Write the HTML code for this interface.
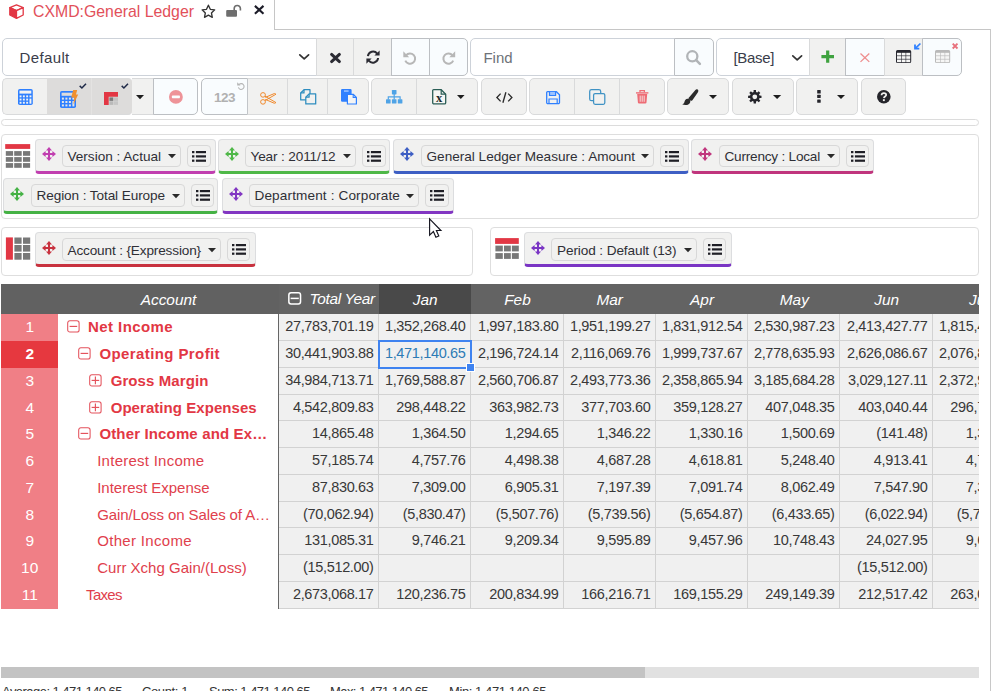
<!DOCTYPE html>
<html><head><meta charset="utf-8"><title>CXMD:General Ledger</title>
<style>
html,body{margin:0;padding:0;background:#fff;}
body{width:995px;height:691px;overflow:hidden;position:relative;font-family:"Liberation Sans",sans-serif;}
.a{position:absolute;box-sizing:border-box;}
.t{position:absolute;white-space:pre;font-family:"Liberation Sans",sans-serif;}
svg{overflow:visible;}

.btn{background:#f1f1f0;border:1px solid #d9dadb;}
.btnw{background:#f9fcfe;border:1px solid #bcbfc3;}
.act{background:#dddcdb;}
.chip{background:#f1f1f0;border:1px solid #dcdddf;border-radius:4px;}
.dd{background:#f1f1f0;border:1px solid #d8d8d8;border-radius:4px;}
.pbox{background:#fff;border:1px solid #dedede;border-radius:4px;}
</style></head>
<body>
<div class="a " style="left:274px;top:0px;width:717px;height:30px;border-left:1px solid #c6c6c6;border-bottom:1px solid #c6c6c6;"></div>
<div class="a " style="left:990px;top:29px;width:1px;height:662px;background:#c8c8c8;"></div>
<span id="t1" class="t" style="left:33.3px;top:0.5px;font-size:17px;color:#e2505a;line-height:22px;height:22px;transform:scaleX(0.9311);transform-origin:0 0;">CXMD:General Ledger</span>
<div class="a " style="left:2px;top:38px;width:315px;height:38px;background:#fff;border:1px solid #cdd2d9;border-radius:5px 0 0 5px;"></div>
<span id="t2" class="t" style="left:19.6px;top:46.7px;font-size:15px;color:#3a3d4a;line-height:22px;height:22px;letter-spacing:0.353px;">Default</span>
<div class="a btn" style="left:316px;top:38px;width:38px;height:38px;"></div>
<div class="a btn" style="left:353px;top:38px;width:39px;height:38px;"></div>
<div class="a btnw" style="left:391px;top:38px;width:39px;height:38px;"></div>
<div class="a btnw" style="left:429px;top:38px;width:39px;height:38px;border-radius:0 5px 5px 0;"></div>
<div class="a " style="left:470px;top:38px;width:205px;height:38px;background:#fff;border:1px solid #cdd2d9;border-radius:5px 0 0 5px;"></div>
<span id="t3" class="t" style="left:483.5px;top:46.7px;font-size:15px;color:#6e7278;line-height:22px;height:22px;letter-spacing:-0.047px;">Find</span>
<div class="a btnw" style="left:674px;top:38px;width:40px;height:38px;border-radius:0 5px 5px 0;"></div>
<div class="a " style="left:716px;top:38px;width:94px;height:38px;background:#fff;border:1px solid #cdd2d9;border-radius:5px 0 0 5px;"></div>
<span id="t4" class="t" style="left:733.5px;top:46.7px;font-size:15px;color:#3a3d4a;line-height:22px;height:22px;letter-spacing:-0.339px;">[Base]</span>
<div class="a btn" style="left:809px;top:38px;width:37px;height:38px;"></div>
<div class="a btnw" style="left:845px;top:38px;width:40px;height:38px;"></div>
<div class="a btn" style="left:884px;top:38px;width:39px;height:38px;"></div>
<div class="a btnw" style="left:922px;top:38px;width:40px;height:38px;border-radius:0 5px 5px 0;"></div>
<div class="a btn" style="left:2px;top:78px;width:46px;height:37px;border-radius:5px 0 0 5px;border-right-color:#f1f1f0;"></div>
<div class="a btn act" style="left:47px;top:78px;width:45px;height:37px;border-radius:0;border-left-color:#dddcdb;border-right-color:#e4e3e2;border-radius:0;"></div>
<div class="a btn act" style="left:91px;top:78px;width:41px;height:37px;border-radius:0 4px 4px 0;border-left-color:#e4e3e2;border-right-color:#dddcdb;"></div>
<div class="a btn" style="left:132px;top:78px;width:22px;height:37px;border-radius:0;border-left:none;border-right:none;"></div>
<div class="a btnw" style="left:153px;top:78px;width:45px;height:37px;border-radius:0 5px 5px 0;"></div>
<div class="a btnw" style="left:201px;top:78px;width:47px;height:37px;border-radius:5px 0 0 5px;"></div>
<div class="a btn" style="left:247px;top:78px;width:41px;height:37px;border-radius:0;border-left-color:#c2c5c9;"></div>
<div class="a btn" style="left:287px;top:78px;width:41px;height:37px;border-radius:0;"></div>
<div class="a btn" style="left:327px;top:78px;width:42px;height:37px;border-radius:0 5px 5px 0;"></div>
<div class="a btn" style="left:371px;top:78px;width:46px;height:37px;border-radius:5px 0 0 5px;"></div>
<div class="a btn" style="left:416px;top:78px;width:62px;height:37px;border-radius:0 5px 5px 0;"></div>
<div class="a btn" style="left:481px;top:78px;width:46px;height:37px;border-radius:5px;"></div>
<div class="a btn" style="left:529px;top:78px;width:46px;height:37px;border-radius:5px 0 0 5px;"></div>
<div class="a btn" style="left:574px;top:78px;width:46px;height:37px;border-radius:0;"></div>
<div class="a btn" style="left:619px;top:78px;width:46px;height:37px;border-radius:0 5px 5px 0;"></div>
<div class="a btn" style="left:667px;top:78px;width:62px;height:37px;border-radius:5px;"></div>
<div class="a btn" style="left:732px;top:78px;width:62px;height:37px;border-radius:5px;"></div>
<div class="a btn" style="left:796px;top:78px;width:62px;height:37px;border-radius:5px;"></div>
<div class="a btn" style="left:861px;top:78px;width:45px;height:37px;border-radius:5px;"></div>
<div class="a " style="left:1px;top:119px;width:978px;height:7px;border:1px solid #dcdcdc;border-radius:4px;background:#fff;"></div>
<div class="a pbox" style="left:1px;top:134px;width:978px;height:85px;"></div>
<div class="a pbox" style="left:1px;top:227px;width:472px;height:49px;"></div>
<div class="a pbox" style="left:490px;top:227px;width:489px;height:49px;"></div>
<div class="a chip" style="left:35px;top:139px;width:181px;height:35px;border-bottom:3px solid #c13fb0;"></div>
<div class="a dd" style="left:62px;top:145px;width:119px;height:22px;"></div>
<div class="a dd" style="left:187px;top:145px;width:24px;height:22px;"></div>
<span id="t5" class="t" style="left:67.5px;top:148.1px;font-size:13.6px;color:#2f2f36;line-height:18px;height:18px;letter-spacing:-0.013px;">Version : Actual</span>
<svg class="a" style="left:168px;top:154.3px;" width="8" height="4.2" viewBox="0 0 8 4.2"><path d="M0 0h8L4 4.2z" fill="#2a2a2a"/></svg>
<svg class="a" style="left:192.0px;top:150.7px;" width="14" height="11" viewBox="0 0 14 11"><g fill="#1f1f26"><rect x="0" y="0" width="2.4" height="2.2"/><rect x="0" y="4.3" width="2.4" height="2.2"/><rect x="0" y="8.6" width="2.4" height="2.2"/><rect x="3.9" y="0" width="10.1" height="2.2"/><rect x="3.9" y="4.3" width="10.1" height="2.2"/><rect x="3.9" y="8.6" width="10.1" height="2.2"/></g></svg>
<svg class="a" style="left:41.9px;top:146.9px;" width="14" height="14" viewBox="0 0 14 14"><g fill="none" stroke="#c13fb0" stroke-width="2"><path d="M7 2v10M2 7h10"/></g><g fill="#c13fb0"><path d="M7 0l3 3.6H4z"/><path d="M7 14l3-3.6H4z"/><path d="M0 7l3.6-3v6z"/><path d="M14 7l-3.6-3v6z"/></g></svg>
<div class="a chip" style="left:218px;top:139px;width:172px;height:35px;border-bottom:3px solid #4fb848;"></div>
<div class="a dd" style="left:245px;top:145px;width:111px;height:22px;"></div>
<div class="a dd" style="left:362px;top:145px;width:24px;height:22px;"></div>
<span id="t6" class="t" style="left:250.5px;top:148.1px;font-size:13.6px;color:#2f2f36;line-height:18px;height:18px;letter-spacing:-0.138px;">Year : 2011/12</span>
<svg class="a" style="left:343px;top:154.3px;" width="8" height="4.2" viewBox="0 0 8 4.2"><path d="M0 0h8L4 4.2z" fill="#2a2a2a"/></svg>
<svg class="a" style="left:367.0px;top:150.7px;" width="14" height="11" viewBox="0 0 14 11"><g fill="#1f1f26"><rect x="0" y="0" width="2.4" height="2.2"/><rect x="0" y="4.3" width="2.4" height="2.2"/><rect x="0" y="8.6" width="2.4" height="2.2"/><rect x="3.9" y="0" width="10.1" height="2.2"/><rect x="3.9" y="4.3" width="10.1" height="2.2"/><rect x="3.9" y="8.6" width="10.1" height="2.2"/></g></svg>
<svg class="a" style="left:224.9px;top:146.9px;" width="14" height="14" viewBox="0 0 14 14"><g fill="none" stroke="#4fb848" stroke-width="2"><path d="M7 2v10M2 7h10"/></g><g fill="#4fb848"><path d="M7 0l3 3.6H4z"/><path d="M7 14l3-3.6H4z"/><path d="M0 7l3.6-3v6z"/><path d="M14 7l-3.6-3v6z"/></g></svg>
<div class="a chip" style="left:393px;top:139px;width:296px;height:35px;border-bottom:3px solid #3e5fc4;"></div>
<div class="a dd" style="left:421px;top:145px;width:233px;height:22px;"></div>
<div class="a dd" style="left:660px;top:145px;width:24px;height:22px;"></div>
<span id="t7" class="t" style="left:426.5px;top:148.1px;font-size:13.6px;color:#2f2f36;line-height:18px;height:18px;letter-spacing:-0.002px;">General Ledger Measure : Amount</span>
<svg class="a" style="left:641px;top:154.3px;" width="8" height="4.2" viewBox="0 0 8 4.2"><path d="M0 0h8L4 4.2z" fill="#2a2a2a"/></svg>
<svg class="a" style="left:665.0px;top:150.7px;" width="14" height="11" viewBox="0 0 14 11"><g fill="#1f1f26"><rect x="0" y="0" width="2.4" height="2.2"/><rect x="0" y="4.3" width="2.4" height="2.2"/><rect x="0" y="8.6" width="2.4" height="2.2"/><rect x="3.9" y="0" width="10.1" height="2.2"/><rect x="3.9" y="4.3" width="10.1" height="2.2"/><rect x="3.9" y="8.6" width="10.1" height="2.2"/></g></svg>
<svg class="a" style="left:399.9px;top:146.9px;" width="14" height="14" viewBox="0 0 14 14"><g fill="none" stroke="#3e5fc4" stroke-width="2"><path d="M7 2v10M2 7h10"/></g><g fill="#3e5fc4"><path d="M7 0l3 3.6H4z"/><path d="M7 14l3-3.6H4z"/><path d="M0 7l3.6-3v6z"/><path d="M14 7l-3.6-3v6z"/></g></svg>
<div class="a chip" style="left:691px;top:139px;width:183px;height:35px;border-bottom:3px solid #c0357d;"></div>
<div class="a dd" style="left:719px;top:145px;width:121px;height:22px;"></div>
<div class="a dd" style="left:846px;top:145px;width:23px;height:22px;"></div>
<span id="t8" class="t" style="left:724.5px;top:148.1px;font-size:13.6px;color:#2f2f36;line-height:18px;height:18px;letter-spacing:-0.218px;">Currency : Local</span>
<svg class="a" style="left:827px;top:154.3px;" width="8" height="4.2" viewBox="0 0 8 4.2"><path d="M0 0h8L4 4.2z" fill="#2a2a2a"/></svg>
<svg class="a" style="left:850.5px;top:150.7px;" width="14" height="11" viewBox="0 0 14 11"><g fill="#1f1f26"><rect x="0" y="0" width="2.4" height="2.2"/><rect x="0" y="4.3" width="2.4" height="2.2"/><rect x="0" y="8.6" width="2.4" height="2.2"/><rect x="3.9" y="0" width="10.1" height="2.2"/><rect x="3.9" y="4.3" width="10.1" height="2.2"/><rect x="3.9" y="8.6" width="10.1" height="2.2"/></g></svg>
<svg class="a" style="left:697.9px;top:146.9px;" width="14" height="14" viewBox="0 0 14 14"><g fill="none" stroke="#c0357d" stroke-width="2"><path d="M7 2v10M2 7h10"/></g><g fill="#c0357d"><path d="M7 0l3 3.6H4z"/><path d="M7 14l3-3.6H4z"/><path d="M0 7l3.6-3v6z"/><path d="M14 7l-3.6-3v6z"/></g></svg>
<div class="a chip" style="left:3px;top:178px;width:215px;height:36px;border-bottom:3px solid #45b245;"></div>
<div class="a dd" style="left:31px;top:184px;width:154px;height:23px;"></div>
<div class="a dd" style="left:191px;top:184px;width:23px;height:23px;"></div>
<span id="t9" class="t" style="left:36.5px;top:187.3px;font-size:13.6px;color:#2f2f36;line-height:18px;height:18px;letter-spacing:-0.095px;">Region : Total Europe</span>
<svg class="a" style="left:172px;top:194.0px;" width="8" height="4.2" viewBox="0 0 8 4.2"><path d="M0 0h8L4 4.2z" fill="#2a2a2a"/></svg>
<svg class="a" style="left:195.5px;top:190.39999999999998px;" width="14" height="11" viewBox="0 0 14 11"><g fill="#1f1f26"><rect x="0" y="0" width="2.4" height="2.2"/><rect x="0" y="4.3" width="2.4" height="2.2"/><rect x="0" y="8.6" width="2.4" height="2.2"/><rect x="3.9" y="0" width="10.1" height="2.2"/><rect x="3.9" y="4.3" width="10.1" height="2.2"/><rect x="3.9" y="8.6" width="10.1" height="2.2"/></g></svg>
<svg class="a" style="left:9.899999999999999px;top:187px;" width="14" height="14" viewBox="0 0 14 14"><g fill="none" stroke="#45b245" stroke-width="2"><path d="M7 2v10M2 7h10"/></g><g fill="#45b245"><path d="M7 0l3 3.6H4z"/><path d="M7 14l3-3.6H4z"/><path d="M0 7l3.6-3v6z"/><path d="M14 7l-3.6-3v6z"/></g></svg>
<div class="a chip" style="left:222px;top:178px;width:232px;height:36px;border-bottom:3px solid #8236c2;"></div>
<div class="a dd" style="left:249px;top:184px;width:170px;height:23px;"></div>
<div class="a dd" style="left:425px;top:184px;width:24px;height:23px;"></div>
<span id="t10" class="t" style="left:254.5px;top:187.3px;font-size:13.6px;color:#2f2f36;line-height:18px;height:18px;letter-spacing:0.122px;">Department : Corporate</span>
<svg class="a" style="left:406px;top:194.0px;" width="8" height="4.2" viewBox="0 0 8 4.2"><path d="M0 0h8L4 4.2z" fill="#2a2a2a"/></svg>
<svg class="a" style="left:430.0px;top:190.39999999999998px;" width="14" height="11" viewBox="0 0 14 11"><g fill="#1f1f26"><rect x="0" y="0" width="2.4" height="2.2"/><rect x="0" y="4.3" width="2.4" height="2.2"/><rect x="0" y="8.6" width="2.4" height="2.2"/><rect x="3.9" y="0" width="10.1" height="2.2"/><rect x="3.9" y="4.3" width="10.1" height="2.2"/><rect x="3.9" y="8.6" width="10.1" height="2.2"/></g></svg>
<svg class="a" style="left:228.9px;top:187px;" width="14" height="14" viewBox="0 0 14 14"><g fill="none" stroke="#8236c2" stroke-width="2"><path d="M7 2v10M2 7h10"/></g><g fill="#8236c2"><path d="M7 0l3 3.6H4z"/><path d="M7 14l3-3.6H4z"/><path d="M0 7l3.6-3v6z"/><path d="M14 7l-3.6-3v6z"/></g></svg>
<div class="a chip" style="left:35px;top:232px;width:221px;height:35px;border-bottom:3px solid #c8323f;"></div>
<div class="a dd" style="left:62px;top:238px;width:159px;height:23px;"></div>
<div class="a dd" style="left:227px;top:238px;width:23px;height:23px;"></div>
<span id="t11" class="t" style="left:67.5px;top:241.5px;font-size:13.6px;color:#2f2f36;line-height:18px;height:18px;letter-spacing:-0.149px;">Account : {Expression}</span>
<svg class="a" style="left:208px;top:248.0px;" width="8" height="4.2" viewBox="0 0 8 4.2"><path d="M0 0h8L4 4.2z" fill="#2a2a2a"/></svg>
<svg class="a" style="left:231.5px;top:244.39999999999998px;" width="14" height="11" viewBox="0 0 14 11"><g fill="#1f1f26"><rect x="0" y="0" width="2.4" height="2.2"/><rect x="0" y="4.3" width="2.4" height="2.2"/><rect x="0" y="8.6" width="2.4" height="2.2"/><rect x="3.9" y="0" width="10.1" height="2.2"/><rect x="3.9" y="4.3" width="10.1" height="2.2"/><rect x="3.9" y="8.6" width="10.1" height="2.2"/></g></svg>
<svg class="a" style="left:41.9px;top:241px;" width="14" height="14" viewBox="0 0 14 14"><g fill="none" stroke="#c8323f" stroke-width="2"><path d="M7 2v10M2 7h10"/></g><g fill="#c8323f"><path d="M7 0l3 3.6H4z"/><path d="M7 14l3-3.6H4z"/><path d="M0 7l3.6-3v6z"/><path d="M14 7l-3.6-3v6z"/></g></svg>
<div class="a chip" style="left:524px;top:232px;width:208px;height:35px;border-bottom:3px solid #7a35c4;"></div>
<div class="a dd" style="left:551px;top:238px;width:146px;height:23px;"></div>
<div class="a dd" style="left:703px;top:238px;width:23px;height:23px;"></div>
<span id="t12" class="t" style="left:557px;top:241.5px;font-size:13.6px;color:#2f2f36;line-height:18px;height:18px;letter-spacing:-0.103px;">Period : Default (13)</span>
<svg class="a" style="left:684px;top:248.0px;" width="8" height="4.2" viewBox="0 0 8 4.2"><path d="M0 0h8L4 4.2z" fill="#2a2a2a"/></svg>
<svg class="a" style="left:707.5px;top:244.39999999999998px;" width="14" height="11" viewBox="0 0 14 11"><g fill="#1f1f26"><rect x="0" y="0" width="2.4" height="2.2"/><rect x="0" y="4.3" width="2.4" height="2.2"/><rect x="0" y="8.6" width="2.4" height="2.2"/><rect x="3.9" y="0" width="10.1" height="2.2"/><rect x="3.9" y="4.3" width="10.1" height="2.2"/><rect x="3.9" y="8.6" width="10.1" height="2.2"/></g></svg>
<svg class="a" style="left:530.9px;top:241px;" width="14" height="14" viewBox="0 0 14 14"><g fill="none" stroke="#7a35c4" stroke-width="2"><path d="M7 2v10M2 7h10"/></g><g fill="#7a35c4"><path d="M7 0l3 3.6H4z"/><path d="M7 14l3-3.6H4z"/><path d="M0 7l3.6-3v6z"/><path d="M14 7l-3.6-3v6z"/></g></svg>
<svg class="a" style="left:5px;top:144px;" width="26" height="25" viewBox="0 0 26 25"><rect x="0.2" y="0.1" width="25" height="4.8" fill="#e23744"/><rect x="0.8" y="7.1" width="7.3" height="4.7" fill="#787878"/><rect x="9.2" y="7.1" width="7.5" height="4.7" fill="#787878"/><rect x="18" y="7.1" width="7.1" height="4.7" fill="#787878"/><rect x="0.8" y="13.1" width="7.3" height="4.7" fill="#787878"/><rect x="9.2" y="13.1" width="7.5" height="4.7" fill="#787878"/><rect x="18" y="13.1" width="7.1" height="4.7" fill="#787878"/><rect x="0.8" y="19.1" width="7.3" height="4.7" fill="#787878"/><rect x="9.2" y="19.1" width="7.5" height="4.7" fill="#787878"/><rect x="18" y="19.1" width="7.1" height="4.7" fill="#787878"/></svg>
<svg class="a" style="left:5px;top:237px;" width="26" height="24" viewBox="0 0 26 24"><rect x="0.9" y="0.4" width="7" height="22.3" fill="#e23744"/><rect x="9.4" y="0.5" width="7.2" height="6.3" fill="#787878"/><rect x="18" y="0.5" width="7.2" height="6.3" fill="#787878"/><rect x="9.4" y="8" width="7.2" height="6.6" fill="#787878"/><rect x="18" y="8" width="7.2" height="6.6" fill="#787878"/><rect x="9.4" y="16" width="7.2" height="6.7" fill="#787878"/><rect x="18" y="16" width="7.2" height="6.7" fill="#787878"/></svg>
<svg class="a" style="left:495px;top:238px;" width="25" height="22" viewBox="0 0 25 22"><rect x="0.1" y="0.1" width="23.7" height="5.8" fill="#e23744"/><rect x="0.4" y="7.6" width="7.4" height="5.8" fill="#787878"/><rect x="9" y="7.6" width="6.8" height="5.8" fill="#787878"/><rect x="16.9" y="7.6" width="6.9" height="5.8" fill="#787878"/><rect x="0.4" y="15.1" width="7.4" height="5.8" fill="#787878"/><rect x="9" y="15.1" width="6.8" height="5.8" fill="#787878"/><rect x="16.9" y="15.1" width="6.9" height="5.8" fill="#787878"/></svg>
<div class="a" style="left:1px;top:284px;width:978px;height:325px;overflow:hidden;">
<div class="a" style="left:0px;top:0px;width:278px;height:30px;background:#616161;"></div>
<div class="a" style="left:278px;top:0px;width:100px;height:30px;background:#636363;"></div>
<div class="a" style="left:378px;top:0px;width:92px;height:30px;background:#494949;"></div>
<div class="a" style="left:470px;top:0px;width:93px;height:30px;background:#636363;"></div>
<div class="a" style="left:563px;top:0px;width:92px;height:30px;background:#636363;"></div>
<div class="a" style="left:655px;top:0px;width:92px;height:30px;background:#636363;"></div>
<div class="a" style="left:747px;top:0px;width:92px;height:30px;background:#636363;"></div>
<div class="a" style="left:839px;top:0px;width:93px;height:30px;background:#636363;"></div>
<div class="a" style="left:932px;top:0px;width:92px;height:30px;background:#636363;"></div>
<div class="t" style="left:67.5px;width:200px;text-align:center;top:5.600000000000023px;font-size:15.4px;color:#fff;line-height:20px;height:20px;letter-spacing:-0.018px;font-style:italic;"><span id="t13">Account</span></div>
<span id="t14" class="t" style="top:5.399999999999977px;font-size:15.4px;color:#fff;line-height:20px;height:20px;letter-spacing:-0.317px;font-style:italic;left:308.6px;">Total Year</span>
<div class="t" style="left:324.15px;width:200px;text-align:center;top:5.600000000000023px;font-size:15.4px;color:#fff;line-height:20px;height:20px;font-style:italic;"><span id="t15">Jan</span></div>
<div class="t" style="left:416.45000000000005px;width:200px;text-align:center;top:5.600000000000023px;font-size:15.4px;color:#fff;line-height:20px;height:20px;font-style:italic;"><span id="t16">Feb</span></div>
<div class="t" style="left:508.75px;width:200px;text-align:center;top:5.600000000000023px;font-size:15.4px;color:#fff;line-height:20px;height:20px;font-style:italic;"><span id="t17">Mar</span></div>
<div class="t" style="left:601.05px;width:200px;text-align:center;top:5.600000000000023px;font-size:15.4px;color:#fff;line-height:20px;height:20px;font-style:italic;"><span id="t18">Apr</span></div>
<div class="t" style="left:693.35px;width:200px;text-align:center;top:5.600000000000023px;font-size:15.4px;color:#fff;line-height:20px;height:20px;font-style:italic;"><span id="t19">May</span></div>
<div class="t" style="left:785.65px;width:200px;text-align:center;top:5.600000000000023px;font-size:15.4px;color:#fff;line-height:20px;height:20px;font-style:italic;"><span id="t20">Jun</span></div>
<div class="t" style="left:877.9499999999999px;width:200px;text-align:center;top:5.600000000000023px;font-size:15.4px;color:#fff;line-height:20px;height:20px;font-style:italic;"><span id="t21">Jul</span></div>
<svg class="a" style="left:287.2px;top:8.199999999999989px" width="13.4" height="12.8" viewBox="0 0 13.4 12.8"><rect x="0.85" y="0.85" width="11.7" height="11.1" rx="2.2" fill="none" stroke="#fff" stroke-width="1.5"/><path d="M2.6 6.4h8.2" stroke="#fff" stroke-width="1.5"/></svg>
<div class="a" style="left:0px;top:30px;width:57px;height:27px;background:#f07f86;"></div>
<div class="t" style="left:-71.3px;width:200px;text-align:center;top:32.5px;font-size:15.5px;color:#fff;line-height:20px;height:20px;"><span id="t22">1</span></div>
<svg class="a" style="left:65.6px;top:36.19999999999999px" width="12.8" height="12.8" viewBox="0 0 12.8 12.8"><rect x="0.7" y="0.7" width="11.4" height="11.4" rx="2.2" fill="none" stroke="#e4525c" stroke-width="1.05"/><path d="M2.6 6.4h7.6" stroke="#e4525c" stroke-width="1.15"/></svg>
<span id="t23" class="t" style="top:33px;font-size:15px;color:#e23744;line-height:20px;height:20px;letter-spacing:0.414px;font-weight:bold;left:87.1px;">Net Income</span>
<div class="a" style="left:278px;top:30px;width:100px;height:27px;background:#f0f0f0;border-right:1px solid #d2d2d2;border-bottom:1px solid #d2d2d2;"></div>
<span id="t24" class="t" style="top:32px;font-size:14.5px;color:#383838;line-height:20px;height:20px;letter-spacing:-0.34px;right:605.5px;">27,783,701.19</span>
<div class="a" style="left:378px;top:30px;width:92px;height:27px;background:#f0f0f0;border-right:1px solid #d2d2d2;border-bottom:1px solid #d2d2d2;"></div>
<span id="t25" class="t" style="top:32px;font-size:14.5px;color:#383838;line-height:20px;height:20px;letter-spacing:-0.34px;right:513.5px;">1,352,268.40</span>
<div class="a" style="left:470px;top:30px;width:93px;height:27px;background:#f0f0f0;border-right:1px solid #d2d2d2;border-bottom:1px solid #d2d2d2;"></div>
<span id="t26" class="t" style="top:32px;font-size:14.5px;color:#383838;line-height:20px;height:20px;letter-spacing:-0.34px;right:420.5px;">1,997,183.80</span>
<div class="a" style="left:563px;top:30px;width:92px;height:27px;background:#f0f0f0;border-right:1px solid #d2d2d2;border-bottom:1px solid #d2d2d2;"></div>
<span id="t27" class="t" style="top:32px;font-size:14.5px;color:#383838;line-height:20px;height:20px;letter-spacing:-0.34px;right:328.5px;">1,951,199.27</span>
<div class="a" style="left:655px;top:30px;width:92px;height:27px;background:#f0f0f0;border-right:1px solid #d2d2d2;border-bottom:1px solid #d2d2d2;"></div>
<span id="t28" class="t" style="top:32px;font-size:14.5px;color:#383838;line-height:20px;height:20px;letter-spacing:-0.34px;right:236.5px;">1,831,912.54</span>
<div class="a" style="left:747px;top:30px;width:92px;height:27px;background:#f0f0f0;border-right:1px solid #d2d2d2;border-bottom:1px solid #d2d2d2;"></div>
<span id="t29" class="t" style="top:32px;font-size:14.5px;color:#383838;line-height:20px;height:20px;letter-spacing:-0.34px;right:144.5px;">2,530,987.23</span>
<div class="a" style="left:839px;top:30px;width:93px;height:27px;background:#f0f0f0;border-right:1px solid #d2d2d2;border-bottom:1px solid #d2d2d2;"></div>
<span id="t30" class="t" style="top:32px;font-size:14.5px;color:#383838;line-height:20px;height:20px;letter-spacing:-0.34px;right:51.5px;">2,413,427.77</span>
<div class="a" style="left:932px;top:30px;width:92px;height:27px;background:#f0f0f0;border-right:1px solid #d2d2d2;border-bottom:1px solid #d2d2d2;"></div>
<span id="t31" class="t" style="top:32px;font-size:14.5px;color:#383838;line-height:20px;height:20px;letter-spacing:-0.34px;right:-40.5px;">1,815,432.10</span>
<div class="a" style="left:0px;top:57px;width:57px;height:27px;background:#e6383f;"></div>
<div class="t" style="left:-71.3px;width:200px;text-align:center;top:59.5px;font-size:15.5px;color:#fff;line-height:20px;height:20px;font-weight:bold;"><span id="t32">2</span></div>
<svg class="a" style="left:76.89999999999999px;top:63.19999999999999px" width="12.8" height="12.8" viewBox="0 0 12.8 12.8"><rect x="0.7" y="0.7" width="11.4" height="11.4" rx="2.2" fill="none" stroke="#e4525c" stroke-width="1.05"/><path d="M2.6 6.4h7.6" stroke="#e4525c" stroke-width="1.15"/></svg>
<span id="t33" class="t" style="top:60px;font-size:15px;color:#e23744;line-height:20px;height:20px;letter-spacing:0.402px;font-weight:bold;left:98.39999999999999px;">Operating Profit</span>
<div class="a" style="left:278px;top:57px;width:100px;height:27px;background:#f0f0f0;border-right:1px solid #d2d2d2;border-bottom:1px solid #d2d2d2;"></div>
<span id="t34" class="t" style="top:59px;font-size:14.5px;color:#383838;line-height:20px;height:20px;letter-spacing:-0.34px;right:605.5px;">30,441,903.88</span>
<div class="a" style="left:378px;top:57px;width:92px;height:27px;background:#f0f0f0;border-right:1px solid #d2d2d2;border-bottom:1px solid #d2d2d2;"></div>
<span id="t35" class="t" style="top:59px;font-size:14.5px;color:#2d7bb5;line-height:20px;height:20px;letter-spacing:-0.34px;right:513.5px;">1,471,140.65</span>
<div class="a" style="left:470px;top:57px;width:93px;height:27px;background:#f0f0f0;border-right:1px solid #d2d2d2;border-bottom:1px solid #d2d2d2;"></div>
<span id="t36" class="t" style="top:59px;font-size:14.5px;color:#383838;line-height:20px;height:20px;letter-spacing:-0.34px;right:420.5px;">2,196,724.14</span>
<div class="a" style="left:563px;top:57px;width:92px;height:27px;background:#f0f0f0;border-right:1px solid #d2d2d2;border-bottom:1px solid #d2d2d2;"></div>
<span id="t37" class="t" style="top:59px;font-size:14.5px;color:#383838;line-height:20px;height:20px;letter-spacing:-0.34px;right:328.5px;">2,116,069.76</span>
<div class="a" style="left:655px;top:57px;width:92px;height:27px;background:#f0f0f0;border-right:1px solid #d2d2d2;border-bottom:1px solid #d2d2d2;"></div>
<span id="t38" class="t" style="top:59px;font-size:14.5px;color:#383838;line-height:20px;height:20px;letter-spacing:-0.34px;right:236.5px;">1,999,737.67</span>
<div class="a" style="left:747px;top:57px;width:92px;height:27px;background:#f0f0f0;border-right:1px solid #d2d2d2;border-bottom:1px solid #d2d2d2;"></div>
<span id="t39" class="t" style="top:59px;font-size:14.5px;color:#383838;line-height:20px;height:20px;letter-spacing:-0.34px;right:144.5px;">2,778,635.93</span>
<div class="a" style="left:839px;top:57px;width:93px;height:27px;background:#f0f0f0;border-right:1px solid #d2d2d2;border-bottom:1px solid #d2d2d2;"></div>
<span id="t40" class="t" style="top:59px;font-size:14.5px;color:#383838;line-height:20px;height:20px;letter-spacing:-0.34px;right:51.5px;">2,626,086.67</span>
<div class="a" style="left:932px;top:57px;width:92px;height:27px;background:#f0f0f0;border-right:1px solid #d2d2d2;border-bottom:1px solid #d2d2d2;"></div>
<span id="t41" class="t" style="top:59px;font-size:14.5px;color:#383838;line-height:20px;height:20px;letter-spacing:-0.34px;right:-40.5px;">2,076,853.20</span>
<div class="a" style="left:0px;top:84px;width:57px;height:27px;background:#f07f86;"></div>
<div class="t" style="left:-71.3px;width:200px;text-align:center;top:86.5px;font-size:15.5px;color:#fff;line-height:20px;height:20px;"><span id="t42">3</span></div>
<svg class="a" style="left:88.19999999999999px;top:90.19999999999999px" width="12.8" height="12.8" viewBox="0 0 12.8 12.8"><rect x="0.7" y="0.7" width="11.4" height="11.4" rx="2.2" fill="none" stroke="#e4525c" stroke-width="1.05"/><path d="M2.6 6.4h7.6" stroke="#e4525c" stroke-width="1.15"/><path d="M6.4 2.6v7.6" stroke="#e4525c" stroke-width="1.15"/></svg>
<span id="t43" class="t" style="top:87px;font-size:15px;color:#e23744;line-height:20px;height:20px;letter-spacing:0.084px;font-weight:bold;left:109.69999999999999px;">Gross Margin</span>
<div class="a" style="left:278px;top:84px;width:100px;height:27px;background:#f0f0f0;border-right:1px solid #d2d2d2;border-bottom:1px solid #d2d2d2;"></div>
<span id="t44" class="t" style="top:86px;font-size:14.5px;color:#383838;line-height:20px;height:20px;letter-spacing:-0.34px;right:605.5px;">34,984,713.71</span>
<div class="a" style="left:378px;top:84px;width:92px;height:27px;background:#f0f0f0;border-right:1px solid #d2d2d2;border-bottom:1px solid #d2d2d2;"></div>
<span id="t45" class="t" style="top:86px;font-size:14.5px;color:#383838;line-height:20px;height:20px;letter-spacing:-0.34px;right:513.5px;">1,769,588.87</span>
<div class="a" style="left:470px;top:84px;width:93px;height:27px;background:#f0f0f0;border-right:1px solid #d2d2d2;border-bottom:1px solid #d2d2d2;"></div>
<span id="t46" class="t" style="top:86px;font-size:14.5px;color:#383838;line-height:20px;height:20px;letter-spacing:-0.34px;right:420.5px;">2,560,706.87</span>
<div class="a" style="left:563px;top:84px;width:92px;height:27px;background:#f0f0f0;border-right:1px solid #d2d2d2;border-bottom:1px solid #d2d2d2;"></div>
<span id="t47" class="t" style="top:86px;font-size:14.5px;color:#383838;line-height:20px;height:20px;letter-spacing:-0.34px;right:328.5px;">2,493,773.36</span>
<div class="a" style="left:655px;top:84px;width:92px;height:27px;background:#f0f0f0;border-right:1px solid #d2d2d2;border-bottom:1px solid #d2d2d2;"></div>
<span id="t48" class="t" style="top:86px;font-size:14.5px;color:#383838;line-height:20px;height:20px;letter-spacing:-0.34px;right:236.5px;">2,358,865.94</span>
<div class="a" style="left:747px;top:84px;width:92px;height:27px;background:#f0f0f0;border-right:1px solid #d2d2d2;border-bottom:1px solid #d2d2d2;"></div>
<span id="t49" class="t" style="top:86px;font-size:14.5px;color:#383838;line-height:20px;height:20px;letter-spacing:-0.34px;right:144.5px;">3,185,684.28</span>
<div class="a" style="left:839px;top:84px;width:93px;height:27px;background:#f0f0f0;border-right:1px solid #d2d2d2;border-bottom:1px solid #d2d2d2;"></div>
<span id="t50" class="t" style="top:86px;font-size:14.5px;color:#383838;line-height:20px;height:20px;letter-spacing:-0.34px;right:51.5px;">3,029,127.11</span>
<div class="a" style="left:932px;top:84px;width:92px;height:27px;background:#f0f0f0;border-right:1px solid #d2d2d2;border-bottom:1px solid #d2d2d2;"></div>
<span id="t51" class="t" style="top:86px;font-size:14.5px;color:#383838;line-height:20px;height:20px;letter-spacing:-0.34px;right:-40.5px;">2,372,905.10</span>
<div class="a" style="left:0px;top:111px;width:57px;height:26px;background:#f07f86;"></div>
<div class="t" style="left:-71.3px;width:200px;text-align:center;top:113.5px;font-size:15.5px;color:#fff;line-height:20px;height:20px;"><span id="t52">4</span></div>
<svg class="a" style="left:88.19999999999999px;top:117.19999999999999px" width="12.8" height="12.8" viewBox="0 0 12.8 12.8"><rect x="0.7" y="0.7" width="11.4" height="11.4" rx="2.2" fill="none" stroke="#e4525c" stroke-width="1.05"/><path d="M2.6 6.4h7.6" stroke="#e4525c" stroke-width="1.15"/><path d="M6.4 2.6v7.6" stroke="#e4525c" stroke-width="1.15"/></svg>
<span id="t53" class="t" style="top:114px;font-size:15px;color:#e23744;line-height:20px;height:20px;letter-spacing:0.052px;font-weight:bold;left:109.69999999999999px;">Operating Expenses</span>
<div class="a" style="left:278px;top:111px;width:100px;height:26px;background:#f0f0f0;border-right:1px solid #d2d2d2;border-bottom:1px solid #d2d2d2;"></div>
<span id="t54" class="t" style="top:113px;font-size:14.5px;color:#383838;line-height:20px;height:20px;letter-spacing:-0.34px;right:605.5px;">4,542,809.83</span>
<div class="a" style="left:378px;top:111px;width:92px;height:26px;background:#f0f0f0;border-right:1px solid #d2d2d2;border-bottom:1px solid #d2d2d2;"></div>
<span id="t55" class="t" style="top:113px;font-size:14.5px;color:#383838;line-height:20px;height:20px;letter-spacing:-0.34px;right:513.5px;">298,448.22</span>
<div class="a" style="left:470px;top:111px;width:93px;height:26px;background:#f0f0f0;border-right:1px solid #d2d2d2;border-bottom:1px solid #d2d2d2;"></div>
<span id="t56" class="t" style="top:113px;font-size:14.5px;color:#383838;line-height:20px;height:20px;letter-spacing:-0.34px;right:420.5px;">363,982.73</span>
<div class="a" style="left:563px;top:111px;width:92px;height:26px;background:#f0f0f0;border-right:1px solid #d2d2d2;border-bottom:1px solid #d2d2d2;"></div>
<span id="t57" class="t" style="top:113px;font-size:14.5px;color:#383838;line-height:20px;height:20px;letter-spacing:-0.34px;right:328.5px;">377,703.60</span>
<div class="a" style="left:655px;top:111px;width:92px;height:26px;background:#f0f0f0;border-right:1px solid #d2d2d2;border-bottom:1px solid #d2d2d2;"></div>
<span id="t58" class="t" style="top:113px;font-size:14.5px;color:#383838;line-height:20px;height:20px;letter-spacing:-0.34px;right:236.5px;">359,128.27</span>
<div class="a" style="left:747px;top:111px;width:92px;height:26px;background:#f0f0f0;border-right:1px solid #d2d2d2;border-bottom:1px solid #d2d2d2;"></div>
<span id="t59" class="t" style="top:113px;font-size:14.5px;color:#383838;line-height:20px;height:20px;letter-spacing:-0.34px;right:144.5px;">407,048.35</span>
<div class="a" style="left:839px;top:111px;width:93px;height:26px;background:#f0f0f0;border-right:1px solid #d2d2d2;border-bottom:1px solid #d2d2d2;"></div>
<span id="t60" class="t" style="top:113px;font-size:14.5px;color:#383838;line-height:20px;height:20px;letter-spacing:-0.34px;right:51.5px;">403,040.44</span>
<div class="a" style="left:932px;top:111px;width:92px;height:26px;background:#f0f0f0;border-right:1px solid #d2d2d2;border-bottom:1px solid #d2d2d2;"></div>
<span id="t61" class="t" style="top:113px;font-size:14.5px;color:#383838;line-height:20px;height:20px;letter-spacing:-0.34px;right:-40.5px;">296,751.90</span>
<div class="a" style="left:0px;top:137px;width:57px;height:27px;background:#f07f86;"></div>
<div class="t" style="left:-71.3px;width:200px;text-align:center;top:139.5px;font-size:15.5px;color:#fff;line-height:20px;height:20px;"><span id="t62">5</span></div>
<svg class="a" style="left:76.89999999999999px;top:143.2px" width="12.8" height="12.8" viewBox="0 0 12.8 12.8"><rect x="0.7" y="0.7" width="11.4" height="11.4" rx="2.2" fill="none" stroke="#e4525c" stroke-width="1.05"/><path d="M2.6 6.4h7.6" stroke="#e4525c" stroke-width="1.15"/></svg>
<span id="t63" class="t" style="top:140px;font-size:15px;color:#e23744;line-height:20px;height:20px;letter-spacing:0.148px;font-weight:bold;left:98.39999999999999px;">Other Income and Ex…</span>
<div class="a" style="left:278px;top:137px;width:100px;height:27px;background:#f0f0f0;border-right:1px solid #d2d2d2;border-bottom:1px solid #d2d2d2;"></div>
<span id="t64" class="t" style="top:139px;font-size:14.5px;color:#383838;line-height:20px;height:20px;letter-spacing:-0.34px;right:605.5px;">14,865.48</span>
<div class="a" style="left:378px;top:137px;width:92px;height:27px;background:#f0f0f0;border-right:1px solid #d2d2d2;border-bottom:1px solid #d2d2d2;"></div>
<span id="t65" class="t" style="top:139px;font-size:14.5px;color:#383838;line-height:20px;height:20px;letter-spacing:-0.34px;right:513.5px;">1,364.50</span>
<div class="a" style="left:470px;top:137px;width:93px;height:27px;background:#f0f0f0;border-right:1px solid #d2d2d2;border-bottom:1px solid #d2d2d2;"></div>
<span id="t66" class="t" style="top:139px;font-size:14.5px;color:#383838;line-height:20px;height:20px;letter-spacing:-0.34px;right:420.5px;">1,294.65</span>
<div class="a" style="left:563px;top:137px;width:92px;height:27px;background:#f0f0f0;border-right:1px solid #d2d2d2;border-bottom:1px solid #d2d2d2;"></div>
<span id="t67" class="t" style="top:139px;font-size:14.5px;color:#383838;line-height:20px;height:20px;letter-spacing:-0.34px;right:328.5px;">1,346.22</span>
<div class="a" style="left:655px;top:137px;width:92px;height:27px;background:#f0f0f0;border-right:1px solid #d2d2d2;border-bottom:1px solid #d2d2d2;"></div>
<span id="t68" class="t" style="top:139px;font-size:14.5px;color:#383838;line-height:20px;height:20px;letter-spacing:-0.34px;right:236.5px;">1,330.16</span>
<div class="a" style="left:747px;top:137px;width:92px;height:27px;background:#f0f0f0;border-right:1px solid #d2d2d2;border-bottom:1px solid #d2d2d2;"></div>
<span id="t69" class="t" style="top:139px;font-size:14.5px;color:#383838;line-height:20px;height:20px;letter-spacing:-0.34px;right:144.5px;">1,500.69</span>
<div class="a" style="left:839px;top:137px;width:93px;height:27px;background:#f0f0f0;border-right:1px solid #d2d2d2;border-bottom:1px solid #d2d2d2;"></div>
<span id="t70" class="t" style="top:139px;font-size:14.5px;color:#383838;line-height:20px;height:20px;letter-spacing:-0.34px;right:51.5px;">(141.48)</span>
<div class="a" style="left:932px;top:137px;width:92px;height:27px;background:#f0f0f0;border-right:1px solid #d2d2d2;border-bottom:1px solid #d2d2d2;"></div>
<span id="t71" class="t" style="top:139px;font-size:14.5px;color:#383838;line-height:20px;height:20px;letter-spacing:-0.34px;right:-40.5px;">1,342.10</span>
<div class="a" style="left:0px;top:164px;width:57px;height:27px;background:#f07f86;"></div>
<div class="t" style="left:-71.3px;width:200px;text-align:center;top:166.5px;font-size:15.5px;color:#fff;line-height:20px;height:20px;"><span id="t72">6</span></div>
<span id="t73" class="t" style="top:167px;font-size:15px;color:#e0404c;line-height:20px;height:20px;letter-spacing:0.254px;left:96.19999999999999px;">Interest Income</span>
<div class="a" style="left:278px;top:164px;width:100px;height:27px;background:#f0f0f0;border-right:1px solid #d2d2d2;border-bottom:1px solid #d2d2d2;"></div>
<span id="t74" class="t" style="top:166px;font-size:14.5px;color:#383838;line-height:20px;height:20px;letter-spacing:-0.34px;right:605.5px;">57,185.74</span>
<div class="a" style="left:378px;top:164px;width:92px;height:27px;background:#f0f0f0;border-right:1px solid #d2d2d2;border-bottom:1px solid #d2d2d2;"></div>
<span id="t75" class="t" style="top:166px;font-size:14.5px;color:#383838;line-height:20px;height:20px;letter-spacing:-0.34px;right:513.5px;">4,757.76</span>
<div class="a" style="left:470px;top:164px;width:93px;height:27px;background:#f0f0f0;border-right:1px solid #d2d2d2;border-bottom:1px solid #d2d2d2;"></div>
<span id="t76" class="t" style="top:166px;font-size:14.5px;color:#383838;line-height:20px;height:20px;letter-spacing:-0.34px;right:420.5px;">4,498.38</span>
<div class="a" style="left:563px;top:164px;width:92px;height:27px;background:#f0f0f0;border-right:1px solid #d2d2d2;border-bottom:1px solid #d2d2d2;"></div>
<span id="t77" class="t" style="top:166px;font-size:14.5px;color:#383838;line-height:20px;height:20px;letter-spacing:-0.34px;right:328.5px;">4,687.28</span>
<div class="a" style="left:655px;top:164px;width:92px;height:27px;background:#f0f0f0;border-right:1px solid #d2d2d2;border-bottom:1px solid #d2d2d2;"></div>
<span id="t78" class="t" style="top:166px;font-size:14.5px;color:#383838;line-height:20px;height:20px;letter-spacing:-0.34px;right:236.5px;">4,618.81</span>
<div class="a" style="left:747px;top:164px;width:92px;height:27px;background:#f0f0f0;border-right:1px solid #d2d2d2;border-bottom:1px solid #d2d2d2;"></div>
<span id="t79" class="t" style="top:166px;font-size:14.5px;color:#383838;line-height:20px;height:20px;letter-spacing:-0.34px;right:144.5px;">5,248.40</span>
<div class="a" style="left:839px;top:164px;width:93px;height:27px;background:#f0f0f0;border-right:1px solid #d2d2d2;border-bottom:1px solid #d2d2d2;"></div>
<span id="t80" class="t" style="top:166px;font-size:14.5px;color:#383838;line-height:20px;height:20px;letter-spacing:-0.34px;right:51.5px;">4,913.41</span>
<div class="a" style="left:932px;top:164px;width:92px;height:27px;background:#f0f0f0;border-right:1px solid #d2d2d2;border-bottom:1px solid #d2d2d2;"></div>
<span id="t81" class="t" style="top:166px;font-size:14.5px;color:#383838;line-height:20px;height:20px;letter-spacing:-0.34px;right:-40.5px;">4,732.10</span>
<div class="a" style="left:0px;top:191px;width:57px;height:27px;background:#f07f86;"></div>
<div class="t" style="left:-71.3px;width:200px;text-align:center;top:193.5px;font-size:15.5px;color:#fff;line-height:20px;height:20px;"><span id="t82">7</span></div>
<span id="t83" class="t" style="top:194px;font-size:15px;color:#e0404c;line-height:20px;height:20px;letter-spacing:-0.011px;left:96.19999999999999px;">Interest Expense</span>
<div class="a" style="left:278px;top:191px;width:100px;height:27px;background:#f0f0f0;border-right:1px solid #d2d2d2;border-bottom:1px solid #d2d2d2;"></div>
<span id="t84" class="t" style="top:193px;font-size:14.5px;color:#383838;line-height:20px;height:20px;letter-spacing:-0.34px;right:605.5px;">87,830.63</span>
<div class="a" style="left:378px;top:191px;width:92px;height:27px;background:#f0f0f0;border-right:1px solid #d2d2d2;border-bottom:1px solid #d2d2d2;"></div>
<span id="t85" class="t" style="top:193px;font-size:14.5px;color:#383838;line-height:20px;height:20px;letter-spacing:-0.34px;right:513.5px;">7,309.00</span>
<div class="a" style="left:470px;top:191px;width:93px;height:27px;background:#f0f0f0;border-right:1px solid #d2d2d2;border-bottom:1px solid #d2d2d2;"></div>
<span id="t86" class="t" style="top:193px;font-size:14.5px;color:#383838;line-height:20px;height:20px;letter-spacing:-0.34px;right:420.5px;">6,905.31</span>
<div class="a" style="left:563px;top:191px;width:92px;height:27px;background:#f0f0f0;border-right:1px solid #d2d2d2;border-bottom:1px solid #d2d2d2;"></div>
<span id="t87" class="t" style="top:193px;font-size:14.5px;color:#383838;line-height:20px;height:20px;letter-spacing:-0.34px;right:328.5px;">7,197.39</span>
<div class="a" style="left:655px;top:191px;width:92px;height:27px;background:#f0f0f0;border-right:1px solid #d2d2d2;border-bottom:1px solid #d2d2d2;"></div>
<span id="t88" class="t" style="top:193px;font-size:14.5px;color:#383838;line-height:20px;height:20px;letter-spacing:-0.34px;right:236.5px;">7,091.74</span>
<div class="a" style="left:747px;top:191px;width:92px;height:27px;background:#f0f0f0;border-right:1px solid #d2d2d2;border-bottom:1px solid #d2d2d2;"></div>
<span id="t89" class="t" style="top:193px;font-size:14.5px;color:#383838;line-height:20px;height:20px;letter-spacing:-0.34px;right:144.5px;">8,062.49</span>
<div class="a" style="left:839px;top:191px;width:93px;height:27px;background:#f0f0f0;border-right:1px solid #d2d2d2;border-bottom:1px solid #d2d2d2;"></div>
<span id="t90" class="t" style="top:193px;font-size:14.5px;color:#383838;line-height:20px;height:20px;letter-spacing:-0.34px;right:51.5px;">7,547.90</span>
<div class="a" style="left:932px;top:191px;width:92px;height:27px;background:#f0f0f0;border-right:1px solid #d2d2d2;border-bottom:1px solid #d2d2d2;"></div>
<span id="t91" class="t" style="top:193px;font-size:14.5px;color:#383838;line-height:20px;height:20px;letter-spacing:-0.34px;right:-40.5px;">7,302.10</span>
<div class="a" style="left:0px;top:218px;width:57px;height:26px;background:#f07f86;"></div>
<div class="t" style="left:-71.3px;width:200px;text-align:center;top:220.5px;font-size:15.5px;color:#fff;line-height:20px;height:20px;"><span id="t92">8</span></div>
<span id="t93" class="t" style="top:221px;font-size:15px;color:#e0404c;line-height:20px;height:20px;letter-spacing:-0.096px;left:96.19999999999999px;">Gain/Loss on Sales of A…</span>
<div class="a" style="left:278px;top:218px;width:100px;height:26px;background:#f0f0f0;border-right:1px solid #d2d2d2;border-bottom:1px solid #d2d2d2;"></div>
<span id="t94" class="t" style="top:220px;font-size:14.5px;color:#383838;line-height:20px;height:20px;letter-spacing:-0.34px;right:605.5px;">(70,062.94)</span>
<div class="a" style="left:378px;top:218px;width:92px;height:26px;background:#f0f0f0;border-right:1px solid #d2d2d2;border-bottom:1px solid #d2d2d2;"></div>
<span id="t95" class="t" style="top:220px;font-size:14.5px;color:#383838;line-height:20px;height:20px;letter-spacing:-0.34px;right:513.5px;">(5,830.47)</span>
<div class="a" style="left:470px;top:218px;width:93px;height:26px;background:#f0f0f0;border-right:1px solid #d2d2d2;border-bottom:1px solid #d2d2d2;"></div>
<span id="t96" class="t" style="top:220px;font-size:14.5px;color:#383838;line-height:20px;height:20px;letter-spacing:-0.34px;right:420.5px;">(5,507.76)</span>
<div class="a" style="left:563px;top:218px;width:92px;height:26px;background:#f0f0f0;border-right:1px solid #d2d2d2;border-bottom:1px solid #d2d2d2;"></div>
<span id="t97" class="t" style="top:220px;font-size:14.5px;color:#383838;line-height:20px;height:20px;letter-spacing:-0.34px;right:328.5px;">(5,739.56)</span>
<div class="a" style="left:655px;top:218px;width:92px;height:26px;background:#f0f0f0;border-right:1px solid #d2d2d2;border-bottom:1px solid #d2d2d2;"></div>
<span id="t98" class="t" style="top:220px;font-size:14.5px;color:#383838;line-height:20px;height:20px;letter-spacing:-0.34px;right:236.5px;">(5,654.87)</span>
<div class="a" style="left:747px;top:218px;width:92px;height:26px;background:#f0f0f0;border-right:1px solid #d2d2d2;border-bottom:1px solid #d2d2d2;"></div>
<span id="t99" class="t" style="top:220px;font-size:14.5px;color:#383838;line-height:20px;height:20px;letter-spacing:-0.34px;right:144.5px;">(6,433.65)</span>
<div class="a" style="left:839px;top:218px;width:93px;height:26px;background:#f0f0f0;border-right:1px solid #d2d2d2;border-bottom:1px solid #d2d2d2;"></div>
<span id="t100" class="t" style="top:220px;font-size:14.5px;color:#383838;line-height:20px;height:20px;letter-spacing:-0.34px;right:51.5px;">(6,022.94)</span>
<div class="a" style="left:932px;top:218px;width:92px;height:26px;background:#f0f0f0;border-right:1px solid #d2d2d2;border-bottom:1px solid #d2d2d2;"></div>
<span id="t101" class="t" style="top:220px;font-size:14.5px;color:#383838;line-height:20px;height:20px;letter-spacing:-0.34px;right:-40.5px;">(5,798.10)</span>
<div class="a" style="left:0px;top:244px;width:57px;height:27px;background:#f07f86;"></div>
<div class="t" style="left:-71.3px;width:200px;text-align:center;top:246.5px;font-size:15.5px;color:#fff;line-height:20px;height:20px;"><span id="t102">9</span></div>
<span id="t103" class="t" style="top:247px;font-size:15px;color:#e0404c;line-height:20px;height:20px;letter-spacing:0.319px;left:96.19999999999999px;">Other Income</span>
<div class="a" style="left:278px;top:244px;width:100px;height:27px;background:#f0f0f0;border-right:1px solid #d2d2d2;border-bottom:1px solid #d2d2d2;"></div>
<span id="t104" class="t" style="top:246px;font-size:14.5px;color:#383838;line-height:20px;height:20px;letter-spacing:-0.34px;right:605.5px;">131,085.31</span>
<div class="a" style="left:378px;top:244px;width:92px;height:27px;background:#f0f0f0;border-right:1px solid #d2d2d2;border-bottom:1px solid #d2d2d2;"></div>
<span id="t105" class="t" style="top:246px;font-size:14.5px;color:#383838;line-height:20px;height:20px;letter-spacing:-0.34px;right:513.5px;">9,746.21</span>
<div class="a" style="left:470px;top:244px;width:93px;height:27px;background:#f0f0f0;border-right:1px solid #d2d2d2;border-bottom:1px solid #d2d2d2;"></div>
<span id="t106" class="t" style="top:246px;font-size:14.5px;color:#383838;line-height:20px;height:20px;letter-spacing:-0.34px;right:420.5px;">9,209.34</span>
<div class="a" style="left:563px;top:244px;width:92px;height:27px;background:#f0f0f0;border-right:1px solid #d2d2d2;border-bottom:1px solid #d2d2d2;"></div>
<span id="t107" class="t" style="top:246px;font-size:14.5px;color:#383838;line-height:20px;height:20px;letter-spacing:-0.34px;right:328.5px;">9,595.89</span>
<div class="a" style="left:655px;top:244px;width:92px;height:27px;background:#f0f0f0;border-right:1px solid #d2d2d2;border-bottom:1px solid #d2d2d2;"></div>
<span id="t108" class="t" style="top:246px;font-size:14.5px;color:#383838;line-height:20px;height:20px;letter-spacing:-0.34px;right:236.5px;">9,457.96</span>
<div class="a" style="left:747px;top:244px;width:92px;height:27px;background:#f0f0f0;border-right:1px solid #d2d2d2;border-bottom:1px solid #d2d2d2;"></div>
<span id="t109" class="t" style="top:246px;font-size:14.5px;color:#383838;line-height:20px;height:20px;letter-spacing:-0.34px;right:144.5px;">10,748.43</span>
<div class="a" style="left:839px;top:244px;width:93px;height:27px;background:#f0f0f0;border-right:1px solid #d2d2d2;border-bottom:1px solid #d2d2d2;"></div>
<span id="t110" class="t" style="top:246px;font-size:14.5px;color:#383838;line-height:20px;height:20px;letter-spacing:-0.34px;right:51.5px;">24,027.95</span>
<div class="a" style="left:932px;top:244px;width:92px;height:27px;background:#f0f0f0;border-right:1px solid #d2d2d2;border-bottom:1px solid #d2d2d2;"></div>
<span id="t111" class="t" style="top:246px;font-size:14.5px;color:#383838;line-height:20px;height:20px;letter-spacing:-0.34px;right:-40.5px;">9,603.10</span>
<div class="a" style="left:0px;top:271px;width:57px;height:27px;background:#f07f86;"></div>
<div class="t" style="left:-71.3px;width:200px;text-align:center;top:273.5px;font-size:15.5px;color:#fff;line-height:20px;height:20px;"><span id="t112">10</span></div>
<span id="t113" class="t" style="top:274px;font-size:15px;color:#e0404c;line-height:20px;height:20px;letter-spacing:0.013px;left:96.19999999999999px;">Curr Xchg Gain/(Loss)</span>
<div class="a" style="left:278px;top:271px;width:100px;height:27px;background:#f0f0f0;border-right:1px solid #d2d2d2;border-bottom:1px solid #d2d2d2;"></div>
<span id="t114" class="t" style="top:273px;font-size:14.5px;color:#383838;line-height:20px;height:20px;letter-spacing:-0.34px;right:605.5px;">(15,512.00)</span>
<div class="a" style="left:378px;top:271px;width:92px;height:27px;background:#f0f0f0;border-right:1px solid #d2d2d2;border-bottom:1px solid #d2d2d2;"></div>
<div class="a" style="left:470px;top:271px;width:93px;height:27px;background:#f0f0f0;border-right:1px solid #d2d2d2;border-bottom:1px solid #d2d2d2;"></div>
<div class="a" style="left:563px;top:271px;width:92px;height:27px;background:#f0f0f0;border-right:1px solid #d2d2d2;border-bottom:1px solid #d2d2d2;"></div>
<div class="a" style="left:655px;top:271px;width:92px;height:27px;background:#f0f0f0;border-right:1px solid #d2d2d2;border-bottom:1px solid #d2d2d2;"></div>
<div class="a" style="left:747px;top:271px;width:92px;height:27px;background:#f0f0f0;border-right:1px solid #d2d2d2;border-bottom:1px solid #d2d2d2;"></div>
<div class="a" style="left:839px;top:271px;width:93px;height:27px;background:#f0f0f0;border-right:1px solid #d2d2d2;border-bottom:1px solid #d2d2d2;"></div>
<span id="t115" class="t" style="top:273px;font-size:14.5px;color:#383838;line-height:20px;height:20px;letter-spacing:-0.34px;right:51.5px;">(15,512.00)</span>
<div class="a" style="left:932px;top:271px;width:92px;height:27px;background:#f0f0f0;border-right:1px solid #d2d2d2;border-bottom:1px solid #d2d2d2;"></div>
<div class="a" style="left:0px;top:298px;width:57px;height:27px;background:#f07f86;"></div>
<div class="t" style="left:-71.3px;width:200px;text-align:center;top:300.5px;font-size:15.5px;color:#fff;line-height:20px;height:20px;"><span id="t116">11</span></div>
<span id="t117" class="t" style="top:301px;font-size:15px;color:#e0404c;line-height:20px;height:20px;letter-spacing:-0.697px;left:85.1px;">Taxes</span>
<div class="a" style="left:278px;top:298px;width:100px;height:27px;background:#f0f0f0;border-right:1px solid #d2d2d2;border-bottom:1px solid #d2d2d2;"></div>
<span id="t118" class="t" style="top:300px;font-size:14.5px;color:#383838;line-height:20px;height:20px;letter-spacing:-0.34px;right:605.5px;">2,673,068.17</span>
<div class="a" style="left:378px;top:298px;width:92px;height:27px;background:#f0f0f0;border-right:1px solid #d2d2d2;border-bottom:1px solid #d2d2d2;"></div>
<span id="t119" class="t" style="top:300px;font-size:14.5px;color:#383838;line-height:20px;height:20px;letter-spacing:-0.34px;right:513.5px;">120,236.75</span>
<div class="a" style="left:470px;top:298px;width:93px;height:27px;background:#f0f0f0;border-right:1px solid #d2d2d2;border-bottom:1px solid #d2d2d2;"></div>
<span id="t120" class="t" style="top:300px;font-size:14.5px;color:#383838;line-height:20px;height:20px;letter-spacing:-0.34px;right:420.5px;">200,834.99</span>
<div class="a" style="left:563px;top:298px;width:92px;height:27px;background:#f0f0f0;border-right:1px solid #d2d2d2;border-bottom:1px solid #d2d2d2;"></div>
<span id="t121" class="t" style="top:300px;font-size:14.5px;color:#383838;line-height:20px;height:20px;letter-spacing:-0.34px;right:328.5px;">166,216.71</span>
<div class="a" style="left:655px;top:298px;width:92px;height:27px;background:#f0f0f0;border-right:1px solid #d2d2d2;border-bottom:1px solid #d2d2d2;"></div>
<span id="t122" class="t" style="top:300px;font-size:14.5px;color:#383838;line-height:20px;height:20px;letter-spacing:-0.34px;right:236.5px;">169,155.29</span>
<div class="a" style="left:747px;top:298px;width:92px;height:27px;background:#f0f0f0;border-right:1px solid #d2d2d2;border-bottom:1px solid #d2d2d2;"></div>
<span id="t123" class="t" style="top:300px;font-size:14.5px;color:#383838;line-height:20px;height:20px;letter-spacing:-0.34px;right:144.5px;">249,149.39</span>
<div class="a" style="left:839px;top:298px;width:93px;height:27px;background:#f0f0f0;border-right:1px solid #d2d2d2;border-bottom:1px solid #d2d2d2;"></div>
<span id="t124" class="t" style="top:300px;font-size:14.5px;color:#383838;line-height:20px;height:20px;letter-spacing:-0.34px;right:51.5px;">212,517.42</span>
<div class="a" style="left:932px;top:298px;width:92px;height:27px;background:#f0f0f0;border-right:1px solid #d2d2d2;border-bottom:1px solid #d2d2d2;"></div>
<span id="t125" class="t" style="top:300px;font-size:14.5px;color:#383838;line-height:20px;height:20px;letter-spacing:-0.34px;right:-40.5px;">263,051.90</span>
<div class="a" style="left:277px;top:30px;width:1px;height:295px;background:#666;"></div>
<div class="a" style="left:377px;top:56px;width:94px;height:29px;border:2px solid #3f83f0;"></div>
<div class="a" style="left:465px;top:79px;width:9px;height:9px;background:#3f83f0;border:1px solid #fff;"></div>
</div>
<div class="a " style="left:1px;top:667px;width:978px;height:11px;background:#e1e1e1;"></div>
<div class="a " style="left:1px;top:667px;width:644px;height:11px;background:#c3c3c3;"></div>
<span id="t126" class="t" style="left:2px;top:683.8px;font-size:13px;color:#333;line-height:16px;height:16px;letter-spacing:-0.539px;">Average: 1,471,140.65</span>
<span id="t127" class="t" style="left:142px;top:683.8px;font-size:13px;color:#333;line-height:16px;height:16px;letter-spacing:-0.395px;">Count: 1</span>
<span id="t128" class="t" style="left:209px;top:683.8px;font-size:13px;color:#333;line-height:16px;height:16px;letter-spacing:-0.521px;">Sum: 1,471,140.65</span>
<span id="t129" class="t" style="left:330px;top:683.8px;font-size:13px;color:#333;line-height:16px;height:16px;letter-spacing:-0.571px;">Max: 1,471,140.65</span>
<span id="t130" class="t" style="left:449px;top:683.8px;font-size:13px;color:#333;line-height:16px;height:16px;letter-spacing:-0.416px;">Min: 1,471,140.65</span>
<svg class="a" style="left:9px;top:4px;" width="15" height="15" viewBox="0 0 15 15"><g stroke="#e23744" stroke-width="1.3" stroke-linejoin="round"><path d="M7.5 0.8L14.2 3.6L7.5 6.6L0.8 3.6z" fill="#fff"/><path d="M0.8 3.6L7.5 6.6V14.3L0.8 11z" fill="#e23744"/><path d="M14.2 3.6L7.5 6.6V14.3L14.2 11z" fill="#fff"/></g></svg>
<svg class="a" style="left:200.8px;top:3.8px;" width="14.8" height="14.2" viewBox="0 0 14.8 14.2"><path d="M7.4 1.2l1.9 4.1 4.4 0.55-3.25 3.05 0.85 4.4-3.9-2.15-3.9 2.15 0.85-4.4L1.1 5.85l4.4-0.55z" fill="none" stroke="#333" stroke-width="1.35" stroke-linejoin="round"/></svg>
<svg class="a" style="left:226px;top:4px;" width="16" height="13" viewBox="0 0 16 13"><rect x="0.2" y="6.1" width="10.8" height="6.7" rx="1" fill="#6e6e6e"/><path d="M8.2 6.2V4.6a3.1 3.1 0 0 1 6.2 0V6.6" fill="none" stroke="#6e6e6e" stroke-width="1.6"/></svg>
<svg class="a" style="left:254.4px;top:5.2px;" width="10.4" height="9.6" viewBox="0 0 10.4 9.6"><path d="M0.9 0.9L9.5 8.7M9.5 0.9L0.9 8.7" stroke="#1c1c28" stroke-width="2.1"/></svg>
<svg class="a" style="left:299.2px;top:54.3px;" width="10.4" height="6" viewBox="0 0 10.4 6"><path d="M0.8 0.8L5.2 4.9L9.6 0.8" fill="none" stroke="#333" stroke-width="1.7" stroke-linecap="round" stroke-linejoin="round"/></svg>
<svg class="a" style="left:792.2px;top:54.5px;" width="10.4" height="6" viewBox="0 0 10.4 6"><path d="M0.8 0.8L5.2 4.9L9.6 0.8" fill="none" stroke="#333" stroke-width="1.7" stroke-linecap="round" stroke-linejoin="round"/></svg>
<svg class="a" style="left:329.8px;top:52.8px;" width="11" height="10" viewBox="0 0 11 10"><path d="M1.6 1.4L9.4 8.6M9.4 1.4L1.6 8.6" stroke="#2b2b33" stroke-width="3" stroke-linecap="round"/></svg>
<svg class="a" style="left:365.6px;top:49.8px;" width="14" height="14.2" viewBox="0 0 14 14.2"><g fill="none" stroke="#2b2b33" stroke-width="2"><path d="M1.9 6.2A5.2 5.2 0 0 1 11.2 3.6"/><path d="M12.1 8A5.2 5.2 0 0 1 2.8 10.6"/></g><g fill="#2b2b33"><path d="M13.6 0.4V5.6H8.4z"/><path d="M0.4 13.8V8.6H5.6z"/></g></svg>
<svg class="a" style="left:403px;top:50.6px;" width="14.5" height="13" viewBox="0 0 14.5 13"><path d="M3 4.4A5.1 5.1 0 1 1 2.3 9.6" fill="none" stroke="#b7b7b7" stroke-width="2"/><path d="M0.3 0.3V6.2H6.2z" fill="#b7b7b7"/></svg>
<svg class="a" style="left:441px;top:50.6px;" width="14.5" height="13" viewBox="0 0 14.5 13"><path d="M11.5 4.4A5.1 5.1 0 1 0 12.2 9.6" fill="none" stroke="#b7b7b7" stroke-width="2"/><path d="M14.2 0.3V6.2H8.3z" fill="#b7b7b7"/></svg>
<svg class="a" style="left:686.4px;top:50px;" width="15.2" height="15.2" viewBox="0 0 15.2 15.2"><circle cx="6.3" cy="6.3" r="5.1" fill="none" stroke="#b1b4b7" stroke-width="2.3"/><path d="M10.2 10.2L13.9 13.9" stroke="#b1b4b7" stroke-width="2.5" stroke-linecap="round"/></svg>
<svg class="a" style="left:821px;top:50px;" width="13.4" height="13.2" viewBox="0 0 13.4 13.2"><path d="M6.7 0.4V12.8M0.4 6.6H13" stroke="#3fa23f" stroke-width="3.2" stroke-linecap="butt"/></svg>
<svg class="a" style="left:860.4px;top:52.8px;" width="9.8" height="9.4" viewBox="0 0 9.8 9.4"><path d="M0.5 0.5L9.3 8.9M9.3 0.5L0.5 8.9" stroke="#ee8e8e" stroke-width="1.3"/></svg>
<svg class="a" style="left:896.2px;top:50px;" width="15.2" height="13" viewBox="0 0 15.2 13"><path d="M1.5 0h12.2a1.5 1.5 0 0 1 1.5 1.5v10a1.5 1.5 0 0 1-1.5 1.5H1.5A1.5 1.5 0 0 1 0 11.5v-10A1.5 1.5 0 0 1 1.5 0z" fill="#26262e"/><rect x="1.0" y="2.8" width="4.0" height="2.7" fill="#f6f6f5"/><rect x="5.6" y="2.8" width="4.0" height="2.7" fill="#f6f6f5"/><rect x="10.2" y="2.8" width="4.0" height="2.7" fill="#f6f6f5"/><rect x="1.0" y="6.15" width="4.0" height="2.7" fill="#f6f6f5"/><rect x="5.6" y="6.15" width="4.0" height="2.7" fill="#f6f6f5"/><rect x="10.2" y="6.15" width="4.0" height="2.7" fill="#f6f6f5"/><rect x="1.0" y="9.5" width="4.0" height="2.7" fill="#f6f6f5"/><rect x="5.6" y="9.5" width="4.0" height="2.7" fill="#f6f6f5"/><rect x="10.2" y="9.5" width="4.0" height="2.7" fill="#f6f6f5"/></svg>
<svg class="a" style="left:934.8px;top:50px;" width="15.2" height="13" viewBox="0 0 15.2 13"><path d="M1.5 0h12.2a1.5 1.5 0 0 1 1.5 1.5v10a1.5 1.5 0 0 1-1.5 1.5H1.5A1.5 1.5 0 0 1 0 11.5v-10A1.5 1.5 0 0 1 1.5 0z" fill="#b9b9b9"/><rect x="1.0" y="2.8" width="4.0" height="2.7" fill="#f6f6f5"/><rect x="5.6" y="2.8" width="4.0" height="2.7" fill="#f6f6f5"/><rect x="10.2" y="2.8" width="4.0" height="2.7" fill="#f6f6f5"/><rect x="1.0" y="6.15" width="4.0" height="2.7" fill="#f6f6f5"/><rect x="5.6" y="6.15" width="4.0" height="2.7" fill="#f6f6f5"/><rect x="10.2" y="6.15" width="4.0" height="2.7" fill="#f6f6f5"/><rect x="1.0" y="9.5" width="4.0" height="2.7" fill="#f6f6f5"/><rect x="5.6" y="9.5" width="4.0" height="2.7" fill="#f6f6f5"/><rect x="10.2" y="9.5" width="4.0" height="2.7" fill="#f6f6f5"/></svg>
<svg class="a" style="left:914.2px;top:42.8px;" width="7" height="6.6" viewBox="0 0 7 6.6"><path d="M6.4 0.5L1.4 5.4" stroke="#2f80ff" stroke-width="1.7"/><path d="M1 1.5V5.7H5.3" fill="none" stroke="#2f80ff" stroke-width="1.8"/></svg>
<svg class="a" style="left:952px;top:43px;" width="6.2" height="6.2" viewBox="0 0 6.2 6.2"><path d="M0.7 0.7L5.5 5.5M5.5 0.7L0.7 5.5" stroke="#e8717d" stroke-width="1.9"/></svg>
<svg class="a" style="left:17.9px;top:88.9px;" width="14.8" height="16" viewBox="0 0 14.8 16"><rect x="0" y="0" width="14.8" height="16" rx="1.8" fill="#2f80ff"/><rect x="1.5" y="1.6" width="11.8" height="3" fill="#f3f3f3"/><rect x="1.6" y="6.4" width="1.9" height="1.9" fill="#f3f3f3"/><rect x="1.6" y="9.6" width="1.9" height="1.9" fill="#f3f3f3"/><rect x="1.6" y="12.8" width="1.9" height="1.9" fill="#f3f3f3"/><rect x="4.9" y="6.4" width="1.9" height="1.9" fill="#f3f3f3"/><rect x="4.9" y="9.6" width="1.9" height="1.9" fill="#f3f3f3"/><rect x="4.9" y="12.8" width="1.9" height="1.9" fill="#f3f3f3"/><rect x="8.2" y="6.4" width="1.9" height="1.9" fill="#f3f3f3"/><rect x="8.2" y="9.6" width="1.9" height="1.9" fill="#f3f3f3"/><rect x="8.2" y="12.8" width="1.9" height="1.9" fill="#f3f3f3"/><rect x="11.5" y="6.4" width="1.9" height="1.9" fill="#f3f3f3"/><rect x="11.5" y="9.6" width="1.9" height="5.1" fill="#f3f3f3"/></svg>
<svg class="a" style="left:60.1px;top:90.9px;" width="16" height="17" viewBox="0 0 16 17"><rect x="0" y="0" width="16" height="17" rx="1.8" fill="#2f80ff"/><rect x="1.6" y="1.7" width="12.8" height="3.1" fill="#dddcdb"/><rect x="1.9" y="6.6" width="2" height="2" fill="#e6e6e6"/><rect x="1.9" y="10" width="2" height="2" fill="#e6e6e6"/><rect x="1.9" y="13.4" width="2" height="2" fill="#e6e6e6"/><rect x="5.4" y="6.6" width="2" height="2" fill="#e6e6e6"/><rect x="5.4" y="10" width="2" height="2" fill="#e6e6e6"/><rect x="5.4" y="13.4" width="2" height="2" fill="#e6e6e6"/><rect x="8.9" y="6.6" width="2" height="2" fill="#e6e6e6"/><rect x="8.9" y="10" width="2" height="2" fill="#e6e6e6"/><rect x="8.9" y="13.4" width="2" height="2" fill="#e6e6e6"/><rect x="12.4" y="6.6" width="2" height="2" fill="#e6e6e6"/><rect x="12.4" y="10" width="2" height="5.4" fill="#e6e6e6"/></svg>
<svg class="a" style="left:70.8px;top:90px;" width="7.2" height="14.8" viewBox="0 0 7.2 14.8"><path d="M2.2 0H6.2L5 4.6H7.2L2.4 14.6L3.2 7.4H0.2z" fill="#f0902f"/></svg>
<svg class="a" style="left:78.8px;top:82.8px;" width="7.6" height="5.8" viewBox="0 0 7.6 5.8"><path d="M0.7 2.9L2.9 5L7 0.7" fill="none" stroke="#1f2a48" stroke-width="1.5"/></svg>
<svg class="a" style="left:121.2px;top:83px;" width="7.6" height="5.8" viewBox="0 0 7.6 5.8"><path d="M0.7 2.9L2.9 5L7 0.7" fill="none" stroke="#1f2a48" stroke-width="1.5"/></svg>
<svg class="a" style="left:103.9px;top:92.1px;" width="14" height="12.9" viewBox="0 0 14 12.9"><path d="M0 0H14V4.7H4.7V12.9H0z" fill="#e23744"/><rect x="5.4" y="5.4" width="3.9" height="3.5" fill="#7b7b7b"/><rect x="9.7" y="5.4" width="4.3" height="3.5" fill="#c3c3c3"/><rect x="5.4" y="9.3" width="3.9" height="3.6" fill="#b9b9b9"/><rect x="9.7" y="9.3" width="4.3" height="3.6" fill="#c6c6c6"/></svg>
<svg class="a" style="left:136.2px;top:95.1px;" width="8" height="4.2" viewBox="0 0 8 4.2"><path d="M0 0h8L4.0 4.2z" fill="#1e1e1e"/></svg>
<svg class="a" style="left:169.1px;top:90.1px;" width="13.8" height="13.8" viewBox="0 0 13.8 13.8"><circle cx="6.9" cy="6.9" r="6.9" fill="#ee9398"/><rect x="2.9" y="5.6" width="8" height="2.6" rx="0.6" fill="#fbfdfe"/></svg>
<span id="t131" class="t" style="left:214px;top:91px;font-size:13.5px;color:#b1b1b1;line-height:14px;height:14px;letter-spacing:-0.510px;font-weight:bold;">123</span>
<svg class="a" style="left:236.8px;top:82.4px;" width="8" height="7.6" viewBox="0 0 8 7.6"><path d="M2 2.6A2.9 2.9 0 1 1 1.4 5.4" fill="none" stroke="#b5b5b5" stroke-width="1.1"/><path d="M0.2 0.3V3.6H3.5z" fill="#b5b5b5"/></svg>
<svg class="a" style="left:259.5px;top:91.5px;" width="16.6" height="12.8" viewBox="0 0 16.6 12.8"><g fill="none" stroke="#f0892b" stroke-width="1.0"><ellipse cx="3" cy="2.9" rx="2.4" ry="2.3"/><ellipse cx="3" cy="9.9" rx="2.4" ry="2.3"/><path d="M5 4.2L16 10.6L14.4 11.3L5.3 7.4"/><path d="M5 8.6L16 2.2L14.4 1.5L5.3 5.4"/></g></svg>
<svg class="a" style="left:300.2px;top:89.2px;" width="16.4" height="15.6" viewBox="0 0 16.4 15.6"><g fill="#f1f1f0" stroke="#2e8dbf" stroke-width="1.25" stroke-linejoin="round"><path d="M0.7 4L4 0.7H10V11H0.7z"/><path d="M4 0.7V4H0.7" fill="none"/><path d="M5.8 8.2L9.1 4.9H15.7V14.9H5.8z"/><path d="M9.1 4.9V8.2H5.8" fill="none"/></g></svg>
<svg class="a" style="left:340.9px;top:89.2px;" width="16" height="15.6" viewBox="0 0 16 15.6"><path d="M1.2 0H9.4A1.2 1.2 0 0 1 10.6 1.2V12.8H1.2A1.2 1.2 0 0 1 0 11.6V1.2A1.2 1.2 0 0 1 1.2 0z" fill="#2f80ff"/><rect x="3" y="1.3" width="4.6" height="1.5" fill="#9cc3ff"/><path d="M6.4 5.3H12.2L15.4 8.5V15H6.4z" fill="#f4f4f4" stroke="#2f80ff" stroke-width="1.2" stroke-linejoin="round"/><path d="M12.2 5.3V8.5H15.4" fill="none" stroke="#2f80ff" stroke-width="1.1"/></svg>
<svg class="a" style="left:386.1px;top:90.3px;" width="16.4" height="13.7" viewBox="0 0 16.4 13.7"><g fill="#4fa3e6"><rect x="5.9" y="0" width="4.6" height="4.4" rx="0.6"/><rect x="0" y="9.2" width="4.6" height="4.4" rx="0.6"/><rect x="5.9" y="9.2" width="4.6" height="4.4" rx="0.6"/><rect x="11.8" y="9.2" width="4.6" height="4.4" rx="0.6"/></g><path d="M8.2 4V9.4M2.3 9.4V6.8H14.1V9.4" fill="none" stroke="#4fa3e6" stroke-width="1.2"/></svg>
<svg class="a" style="left:431.7px;top:89.2px;" width="14.4" height="15.6" viewBox="0 0 14.4 15.6"><path d="M1.6 0.7H9.2L13.7 5.2V13.7A1.2 1.2 0 0 1 12.5 14.9H1.9A1.2 1.2 0 0 1 0.7 13.7V1.6A0.9 0.9 0 0 1 1.6 0.7z" fill="#f6f6f4" stroke="#2a5d55" stroke-width="1.3"/><path d="M9.2 0.7V5.2H13.7" fill="none" stroke="#2a5d55" stroke-width="1.2"/><text x="7.2" y="13" text-anchor="middle" font-family="Liberation Serif" font-weight="bold" font-size="12.5" fill="#1d2a2a">x</text></svg>
<svg class="a" style="left:457.4px;top:95.1px;" width="7.6" height="4.1" viewBox="0 0 7.6 4.1"><path d="M0 0h7.6L3.8 4.1z" fill="#1e1e1e"/></svg>
<svg class="a" style="left:496px;top:92.4px;" width="16.8" height="11" viewBox="0 0 16.8 11"><g fill="none" stroke="#2a2a2a" stroke-width="1.35" stroke-linejoin="miter"><path d="M4.6 1.6L0.9 5.5L4.6 9.4"/><path d="M12.2 1.6L15.9 5.5L12.2 9.4"/><path d="M9.9 0.3L6.9 10.7"/></g></svg>
<svg class="a" style="left:545.7px;top:90.7px;" width="14.2" height="13.4" viewBox="0 0 14.2 13.4"><path d="M1.5 0.7H10.4L13.5 3.8V11.5A1.2 1.2 0 0 1 12.3 12.7H1.9A1.2 1.2 0 0 1 0.7 11.5V1.5A0.8 0.8 0 0 1 1.5 0.7z" fill="#f1f1f0" stroke="#2f80ff" stroke-width="1.3"/><path d="M3.5 0.9V4.5H9.6V0.9" fill="#9cc3ff" stroke="#2f80ff" stroke-width="1.2"/><path d="M3 12.5V8H11.2V12.5" fill="none" stroke="#2f80ff" stroke-width="1.2"/></svg>
<svg class="a" style="left:589.4px;top:89px;" width="16.5" height="16" viewBox="0 0 16.5 16"><g fill="#f1f1f0" stroke="#3f92c4" stroke-width="1.25"><rect x="0.7" y="0.7" width="11" height="11" rx="1.8"/><rect x="4.6" y="4.5" width="11.2" height="10.8" rx="1.5"/></g></svg>
<svg class="a" style="left:636.2px;top:90.2px;" width="12.4" height="13.6" viewBox="0 0 12.4 13.6"><path d="M0 2.2H12.4V3.6H0z" fill="#ee6c75"/><path d="M4 2.2V0.7H8.4V2.2" fill="none" stroke="#ee6c75" stroke-width="1.3"/><path d="M1.2 4H11.2L10.5 12.4A1.2 1.2 0 0 1 9.3 13.5H3.1A1.2 1.2 0 0 1 1.9 12.4z" fill="#ee6c75"/><path d="M4.2 5.6V11.8M6.2 5.6V11.8M8.2 5.6V11.8" stroke="#f4dcdc" stroke-width="1"/></svg>
<svg class="a" style="left:682.2px;top:89px;" width="16.4" height="16.4" viewBox="0 0 16.4 16.4"><path d="M15.2 0.3C16.6 0.9 16.6 2.2 15.8 3.6L10.4 11.2C9.4 12.4 8.2 11.8 7.2 10.8C6.4 10 6.2 9.2 7 8.4L13.4 0.9C14 0.2 14.6 0 15.2 0.3z" fill="#2b2b2b"/><path d="M5.8 9.7C7.4 9.9 8.6 11.2 8.3 12.9C7.8 15.6 4.6 16.6 0.2 15.6C1.4 15 2.2 14.2 2.5 12.8C2.8 11 4 9.5 5.8 9.7z" fill="#2b2b2b"/></svg>
<svg class="a" style="left:708.6px;top:95.1px;" width="8" height="4.1" viewBox="0 0 8 4.1"><path d="M0 0h8L4.0 4.1z" fill="#1e1e1e"/></svg>
<svg class="a" style="left:748px;top:90.4px;" width="13.6" height="13.6" viewBox="0 0 13.6 13.6"><path d="M13.50 5.63L13.50 7.97L11.55 8.02L11.02 9.29L12.36 10.71L10.71 12.36L9.29 11.02L8.02 11.55L7.97 13.50L5.63 13.50L5.58 11.55L4.31 11.02L2.89 12.36L1.24 10.71L2.58 9.29L2.05 8.02L0.10 7.97L0.10 5.63L2.05 5.58L2.58 4.31L1.24 2.89L2.89 1.24L4.31 2.58L5.58 2.05L5.63 0.10L7.97 0.10L8.02 2.05L9.29 2.58L10.71 1.24L12.36 2.89L11.02 4.31L11.55 5.58z" fill="#25252b"/><circle cx="6.8" cy="6.8" r="2.4" fill="#f1f1f0"/></svg>
<svg class="a" style="left:772.7px;top:95.1px;" width="8.2" height="4.1" viewBox="0 0 8.2 4.1"><path d="M0 0h8.2L4.1 4.1z" fill="#1e1e1e"/></svg>
<svg class="a" style="left:817px;top:90.4px;" width="4" height="13" viewBox="0 0 4 13"><rect x="0.2" y="0" width="3.5" height="3.4" rx="0.5" fill="#25252b"/><rect x="0.2" y="4.7" width="3.5" height="3.4" rx="0.5" fill="#25252b"/><rect x="0.2" y="9.4" width="3.5" height="3.4" rx="0.5" fill="#25252b"/></svg>
<svg class="a" style="left:837px;top:95.1px;" width="8" height="4.1" viewBox="0 0 8 4.1"><path d="M0 0h8L4.0 4.1z" fill="#1e1e1e"/></svg>
<svg class="a" style="left:877.2px;top:90.4px;" width="13.6" height="13.6" viewBox="0 0 13.6 13.6"><circle cx="6.8" cy="6.8" r="6.8" fill="#25252b"/><path d="M4.5 5.2C4.6 3.8 5.6 3.1 6.9 3.1C8.3 3.1 9.2 3.9 9.2 5C9.2 6.4 7 6.6 6.9 8.1" fill="none" stroke="#f1f1f0" stroke-width="1.7"/><rect x="5.9" y="9.2" width="1.9" height="1.9" fill="#f1f1f0"/></svg>
<svg class="a" style="left:429.2px;top:217.6px;" width="13" height="20" viewBox="0 0 13 20"><path d="M0.6 0.9V17.1L4.4 13.5L6.9 19.2L9.8 18L7.4 12.5H11.9z" fill="#fff" stroke="#15151f" stroke-width="1.15" stroke-linejoin="miter"/></svg>
</body></html>
